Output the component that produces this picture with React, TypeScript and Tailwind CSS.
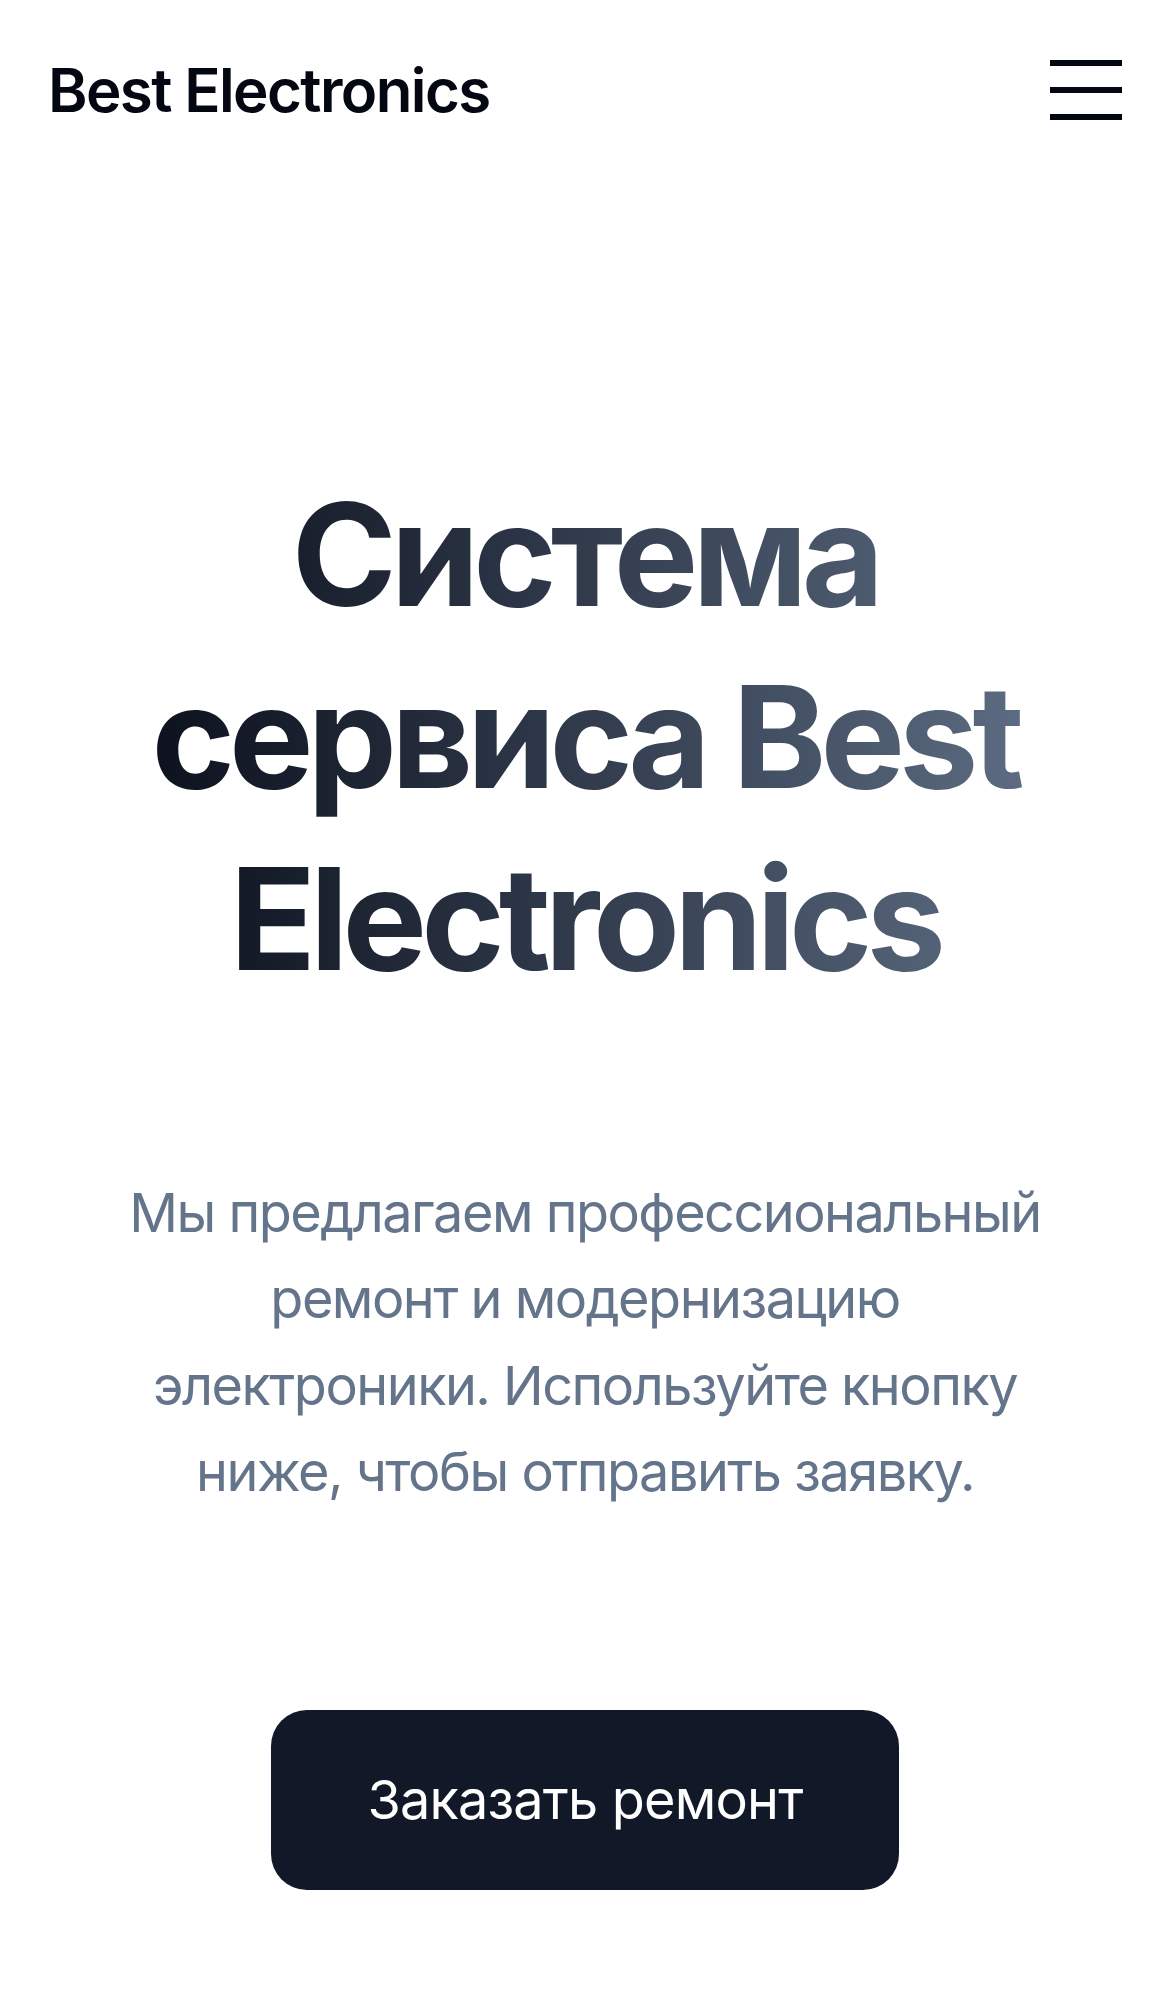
export default function App() {
  return (
    <div className="min-h-screen w-full bg-white font-['Inter','Liberation_Sans',sans-serif]">
      {/* Header */}
      <header className="flex items-center justify-between px-[48px] py-[48px]">
        <span className="text-[60px] leading-[84px] font-semibold tracking-[-1.6px] text-[#030712]">
          Best Electronics
        </span>
        <button className="flex flex-col gap-[21px] py-[6px]">
          <span className="block h-[6px] w-[72px] bg-[#030712]" />
          <span className="block h-[6px] w-[72px] bg-[#030712]" />
          <span className="block h-[6px] w-[72px] bg-[#030712]" />
        </button>
      </header>

      {/* Hero */}
      <main className="flex flex-col items-center px-[72px] text-center">
        <h1 className="mt-[283px] bg-gradient-to-r from-[#070b16] to-[#64748b] bg-clip-text text-[142px] leading-[182px] font-bold tracking-[-6px] text-transparent">
          Система сервиса Best Electronics
        </h1>

        <p className="mt-[161px] max-w-[948px] text-[54px] leading-[86.4px] tracking-[-1.5px] text-[#64748b]">
          Мы предлагаем профессиональный ремонт и модернизацию электроники. Используйте кнопку ниже, чтобы отправить заявку.
        </p>

        <button className="mt-[194px] rounded-[36px] bg-[#111827] px-[96px] py-[48px] text-[54px] leading-[84px] tracking-[-0.8px] text-white">
          Заказать ремонт
        </button>
      </main>
    </div>
  );
}
